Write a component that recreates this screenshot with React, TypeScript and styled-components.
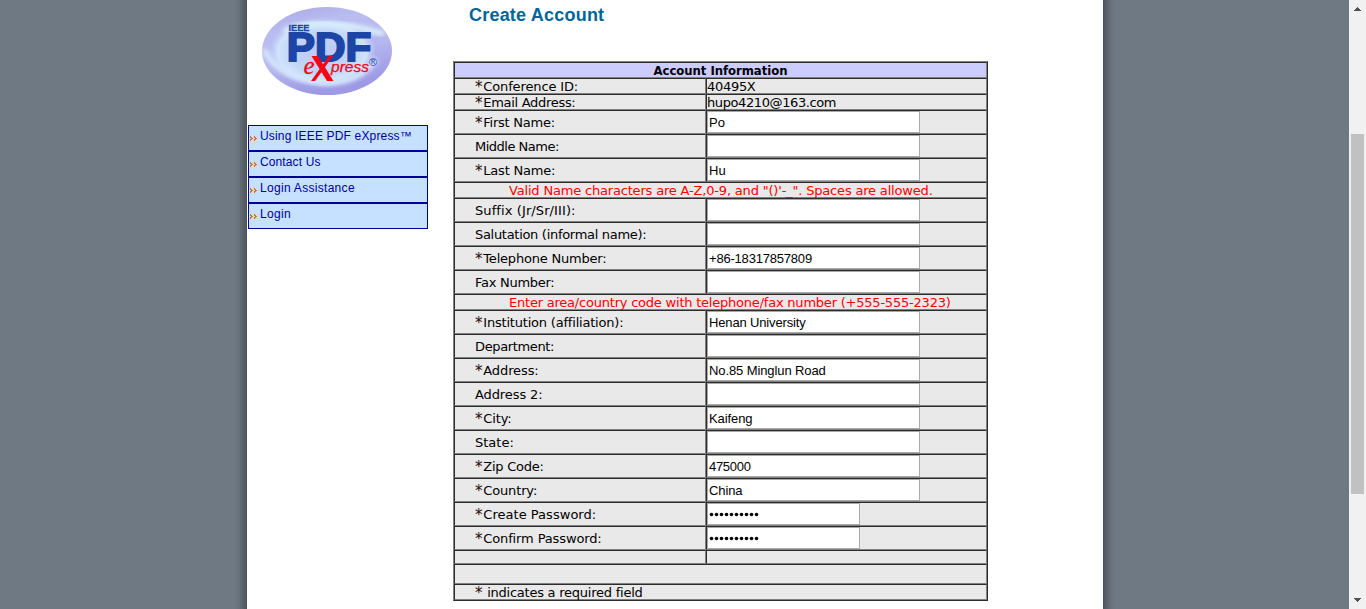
import React from "react";
import styled, { createGlobalStyle } from "styled-components";

const Global = createGlobalStyle`
  * { box-sizing: border-box; }
  html, body { margin: 0; padding: 0; overflow: hidden; }
`;

const Screen = styled.div`
  display: flex;
  width: 1366px;
  height: 609px;
  overflow: hidden;
  background: #6f7983;
  font-family: "Liberation Sans", Arial, sans-serif;
`;

const Backdrop = styled.div`
  flex: 1;
  display: flex;
  padding-left: 234px;
`;

const Shade = styled.div<{ $side: "left" | "right" }>`
  width: 13px;
  background: linear-gradient(
    to ${(p) => p.$side},
    #4a535b 0%,
    #5a636c 30%,
    #69737c 65%,
    #6f7983 100%
  );
`;

const Page = styled.div`
  display: flex;
  width: 856px;
  background: #fff;
`;

const Sidebar = styled.div`
  width: 181px;
  padding: 7px 0 0 1px;
`;

const Logo = styled.svg`
  display: block;
  margin: 0 0 30px 14px;
`;

const NavItem = styled.div`
  display: flex;
  width: 180px;
  height: 26px;
  padding: 3px 0 0 1px;
  border: 1px solid #000099;
  background: #c6e0ff;
  color: #000099;
  font-size: 12px;
  line-height: 14px;
  white-space: nowrap;
`;

const Chevrons = styled.svg`
  flex: none;
  margin: 7px 3px 0 0;
`;

const Content = styled.div`
  padding-left: 25px;
`;

const Title = styled.h1`
  margin: 0;
  padding: 5px 0 0 16px;
  height: 61px;
  font-size: 18px;
  line-height: 20px;
  letter-spacing: 0.21px;
  color: #006699;
  white-space: nowrap;
`;

const Table = styled.div`
  width: 535px;
  border: 1px solid;
  border-color: #808080 #2c2c2c #2c2c2c #808080;
  background: #e9e9e9;
  font-family: "DejaVu Sans", Verdana, sans-serif;
  font-size: 13px;
  line-height: 14px;
  color: #000;
`;

const Row = styled.div<{ $h: number }>`
  display: flex;
  height: ${(p) => p.$h}px;
`;

const Cell = styled.div<{ $w?: number; $pad?: number }>`
  display: flex;
  align-items: center;
  width: ${(p) => p.$w ?? 533}px;
  padding-left: ${(p) => p.$pad ?? 0}px;
  border: 1px solid;
  border-color: #2c2c2c #808080 #808080 #2c2c2c;
  white-space: pre;
`;

const HeadCell = styled(Cell)`
  justify-content: center;
  background: #ccccff;
  font-family: "DejaVu Sans Condensed", "DejaVu Sans", sans-serif;
  font-stretch: condensed;
  font-weight: bold;
`;

const NoteCell = styled(Cell)`
  color: #ff0000;
`;

const Text = styled.span<{ $ls?: number }>`
  padding-top: 2px;
  letter-spacing: ${(p) => p.$ls ?? 0}px;
`;

const Star = styled.span`
  display: inline-block;
  width: 8.3px;
  height: 14px;
  vertical-align: top;
  font-size: 15px;
  line-height: 15px;
  letter-spacing: 0;
  color: #2a0800;
`;

const Field = styled.div<{ $w: number }>`
  width: ${(p) => p.$w}px;
  height: 22px;
  padding: 3px 0 0 1px;
  border: 1px solid #a9a9a9;
  background: #fff;
  font-family: "Liberation Sans", Arial, sans-serif;
  font-size: 13px;
  line-height: 15px;
`;

const Dots = styled.svg`
  display: block;
`;

const Scrollbar = styled.div`
  display: flex;
  flex-direction: column;
  align-items: center;
  justify-content: space-between;
  width: 17px;
  padding: 7px 0;
  background: #f1f1f1;
`;

const Thumb = styled.div`
  width: 13px;
  height: 360px;
  background: #c1c1c1;
`;

const ScrollTop = styled.div`
  display: flex;
  flex-direction: column;
  align-items: center;
  gap: 123px;
`;

type Line =
  | { kind: "field"; label: string; req?: boolean; value?: string; ls?: number; vls?: number; password?: boolean }
  | { kind: "plain"; label: string; value: string; ls?: number; vls?: number }
  | { kind: "note"; text: string; pad: number; ls?: number };

const lines: Line[] = [
  { kind: "plain", label: "Conference ID:", value: "40495X", ls: -0.13, vls: -0.3 },
  { kind: "plain", label: "Email Address:", value: "hupo4210@163.com", ls: -0.3, vls: -0.4 },
  { kind: "field", label: "First Name:", req: true, value: "Po", ls: -0.25 },
  { kind: "field", label: "Middle Name:", ls: -0.5 },
  { kind: "field", label: "Last Name:", req: true, value: "Hu", ls: -0.2 },
  { kind: "note", text: "Valid Name characters are A-Z,0-9, and \"()'-_\". Spaces are allowed.", pad: 54, ls: -0.18 },
  { kind: "field", label: "Suffix (Jr/Sr/III):", ls: 0.1 },
  { kind: "field", label: "Salutation (informal name):", ls: -0.3 },
  { kind: "field", label: "Telephone Number:", req: true, value: "+86-18317857809", ls: -0.2, vls: -0.2 },
  { kind: "field", label: "Fax Number:", ls: -0.27 },
  { kind: "note", text: "Enter area/country code with telephone/fax number (+555-555-2323)", pad: 54, ls: -0.215 },
  { kind: "field", label: "Institution (affiliation):", req: true, value: "Henan University", ls: -0.2, vls: -0.15 },
  { kind: "field", label: "Department:", ls: -0.36 },
  { kind: "field", label: "Address:", req: true, value: "No.85 Minglun Road", ls: -0.1, vls: -0.1 },
  { kind: "field", label: "Address 2:", ls: -0.1 },
  { kind: "field", label: "City:", req: true, value: "Kaifeng", ls: -0.15, vls: -0.1 },
  { kind: "field", label: "State:" },
  { kind: "field", label: "Zip Code:", req: true, value: "475000", ls: -0.25, vls: -0.3 },
  { kind: "field", label: "Country:", req: true, value: "China", ls: -0.15, vls: -0.1 },
  { kind: "field", label: "Create Password:", req: true, password: true, ls: 0.03 },
  { kind: "field", label: "Confirm Password:", req: true, password: true, ls: -0.13 },
];

const NavText = styled.span<{ $ls: number }>`
  letter-spacing: ${(p) => p.$ls}px;
`;

const nav = [
  { text: "Using IEEE PDF eXpress™", ls: 0.17 },
  { text: "Contact Us", ls: 0.12 },
  { text: "Login Assistance", ls: 0.3 },
  { text: "Login", ls: 0.3 },
];

const PasswordDots = () => (
  <Dots width="54" height="15">
    {Array.from({ length: 10 }, (_, i) => (
      <circle key={i} cx={2.5 + i * 5} cy="7.5" r="1.8" fill="#000" />
    ))}
  </Dots>
);

const FormLine = ({ line }: { line: Line }) => {
  if (line.kind === "note") {
    return (
      <Row $h={16}>
        <NoteCell $pad={line.pad}>
          <Text $ls={line.ls}>{line.text}</Text>
        </NoteCell>
      </Row>
    );
  }
  const required = line.kind === "plain" || line.req;
  return (
    <Row $h={line.kind === "plain" ? 16 : 24}>
      <Cell $w={252} $pad={20}>
        <Text $ls={line.ls}>
          {required && <Star>*</Star>}
          {line.label}
        </Text>
      </Cell>
      <Cell $w={281}>
        {line.kind === "plain" ? (
          <Text $ls={line.vls}>{line.value}</Text>
        ) : (
          <Field $w={line.password ? 153 : 213}>
            {line.password ? <PasswordDots /> : <Text $ls={line.vls}>{line.value}</Text>}
          </Field>
        )}
      </Cell>
    </Row>
  );
};

const ExpressLogo = () => (
  <Logo width="131" height="88" viewBox="0 0 131 88">
    <defs>
      <linearGradient id="rim" x1="0" y1="0" x2="0.35" y2="1">
        <stop offset="0" stopColor="#a9a6e6" />
        <stop offset="0.3" stopColor="#b9bdf0" />
        <stop offset="0.65" stopColor="#b6b6f0" />
        <stop offset="1" stopColor="#9d99e4" />
      </linearGradient>
      <radialGradient id="glow" cx="0.5" cy="0.5" r="0.5">
        <stop offset="0" stopColor="#b9c8f4" />
        <stop offset="0.6" stopColor="#c3d6f8" />
        <stop offset="0.82" stopColor="#d0e3fb" />
        <stop offset="1" stopColor="#c4d0f6" stopOpacity="0" />
      </radialGradient>
      <filter id="soft" x="-20%" y="-20%" width="140%" height="140%">
        <feGaussianBlur stdDeviation="2" />
      </filter>
      <clipPath id="oval">
        <ellipse cx="65" cy="44" rx="65" ry="44" />
      </clipPath>
    </defs>
    <ellipse cx="65" cy="44" rx="65" ry="44" fill="url(#rim)" />
    <g clipPath="url(#oval)">
      <ellipse cx="60" cy="45" rx="54" ry="35" fill="url(#glow)" />
      <path d="M22 24 Q60 8 122 27" fill="none" stroke="#d8ecfc" strokeWidth="6" filter="url(#soft)" />
      <path d="M2 42 Q14 70 62 76 Q98 76 114 52" fill="none" stroke="#d4e6fc" strokeWidth="6" filter="url(#soft)" />
    </g>
    <g fontFamily="Liberation Sans, Arial, sans-serif">
      <text x="26.5" y="24" fontSize="9" fontWeight="bold" fill="#1d45a5" stroke="#1d45a5" strokeWidth="0.3" textLength="21" lengthAdjust="spacingAndGlyphs">IEEE</text>
      <text x="24.8" y="54" fontSize="41.5" fontWeight="bold" fill="#1d45a5" stroke="#1d45a5" strokeWidth="2" textLength="84.5" lengthAdjust="spacingAndGlyphs">PDF</text>
      <text x="69" y="64.5" fontSize="14" fontStyle="italic" fill="#f40612" stroke="#f40612" strokeWidth="0.25" textLength="38" lengthAdjust="spacingAndGlyphs">press</text>
      <text x="107" y="58.5" fontSize="11" fill="#1d45a5">®</text>
    </g>
    <text x="41.5" y="67" fontFamily="Liberation Serif, serif" fontSize="25" fontStyle="italic" fill="#f40612" stroke="#f40612" strokeWidth="0.3">e</text>
    <path d="M49.5 49h6.5l15.5 25h-6.5zM67 49h4L53 74h-4z" fill="#f40612" />
  </Logo>
);

export default function App() {
  return (
    <>
      <Global />
      <Screen>
        <Backdrop>
          <Shade $side="left" />
          <Page>
            <Sidebar>
              <ExpressLogo />
              {nav.map((n) => (
                <NavItem key={n.text}>
                  <Chevrons width="7" height="6" shapeRendering="crispEdges">
                    <path
                      d="M0 0h1v1h1v1h1v1h-1v1h-1v1h-1v-2h1v-1h-1zM4 0h1v1h1v1h1v1h-1v1h-1v1h-1v-2h1v-1h-1z"
                      fill="#f26a00"
                    />
                  </Chevrons>
                  <NavText $ls={n.ls}>{n.text}</NavText>
                </NavItem>
              ))}
            </Sidebar>
            <Content>
              <Title>Create Account</Title>
              <Table>
                <Row $h={16}>
                  <HeadCell>
                    <Text $ls={-0.05}>Account Information</Text>
                  </HeadCell>
                </Row>
                {lines.map((line, i) => (
                  <FormLine key={i} line={line} />
                ))}
                <Row $h={14}>
                  <Cell $w={252} />
                  <Cell $w={281} />
                </Row>
                <Row $h={20}>
                  <Cell />
                </Row>
                <Row $h={16}>
                  <Cell $pad={20}>
                    <Text $ls={-0.24}>
                      <Star>*</Star> indicates a required field
                    </Text>
                  </Cell>
                </Row>
              </Table>
            </Content>
          </Page>
          <Shade $side="right" />
        </Backdrop>
        <Scrollbar>
          <ScrollTop>
            <svg width="7" height="4" shapeRendering="crispEdges">
              <path d="M3 0h1v1h1v1h1v1h1v1H0v-1h1v-1h1v-1h1z" fill="#505050" />
            </svg>
            <Thumb />
          </ScrollTop>
          <svg width="7" height="4" shapeRendering="crispEdges">
            <path d="M0 0h7v1h-1v1h-1v1h-1v1h-1v-1h-1v-1h-1v-1h-1z" fill="#505050" />
          </svg>
        </Scrollbar>
      </Screen>
    </>
  );
}
